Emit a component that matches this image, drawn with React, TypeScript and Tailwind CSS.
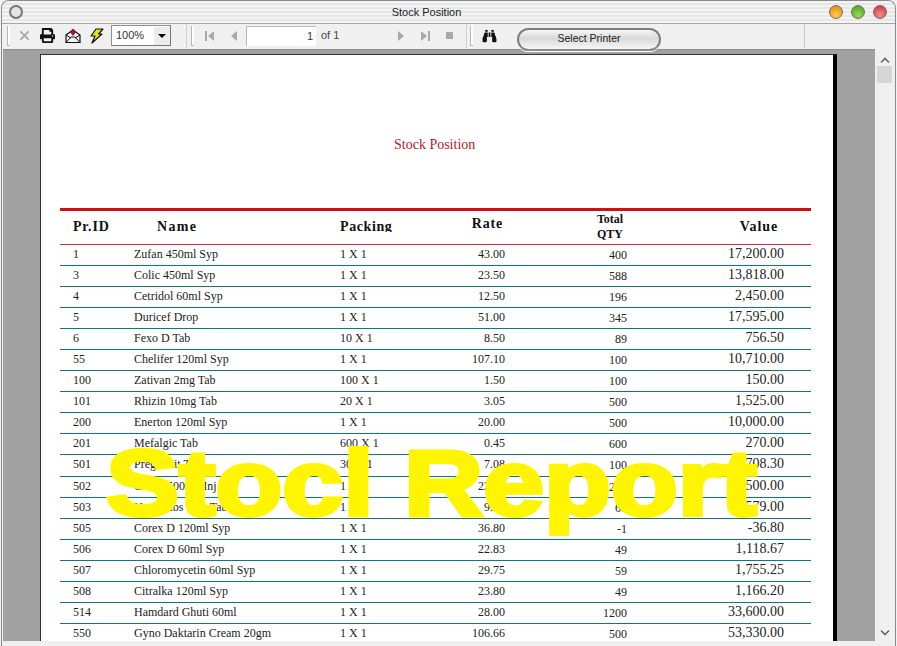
import React from "react";
import { FaBinoculars, FaPrint } from "react-icons/fa";

const rows = [
  ["1", "Zufan 450ml Syp", "1 X 1", "43.00", "400", "17,200.00"],
  ["3", "Colic 450ml Syp", "1 X 1", "23.50", "588", "13,818.00"],
  ["4", "Cetridol 60ml Syp", "1 X 1", "12.50", "196", "2,450.00"],
  ["5", "Duricef Drop", "1 X 1", "51.00", "345", "17,595.00"],
  ["6", "Fexo D Tab", "10 X 1", "8.50", "89", "756.50"],
  ["55", "Chelifer 120ml Syp", "1 X 1", "107.10", "100", "10,710.00"],
  ["100", "Zativan 2mg Tab", "100 X 1", "1.50", "100", "150.00"],
  ["101", "Rhizin 10mg Tab", "20 X 1", "3.05", "500", "1,525.00"],
  ["200", "Enerton 120ml Syp", "1 X 1", "20.00", "500", "10,000.00"],
  ["201", "Mefalgic Tab", "600 X 1", "0.45", "600", "270.00"],
  ["501", "Pregnovit Tab", "30 X 1", "7.08", "100", "708.30"],
  ["502", "Cefim 500mg Inj", "1 X 1", "22.50", "200", "4,500.00"],
  ["503", "Neurotabs Plus Tab", "1 X 1", "9.65", "60", "579.00"],
  ["505", "Corex D 120ml Syp", "1 X 1", "36.80", "-1", "-36.80"],
  ["506", "Corex D 60ml Syp", "1 X 1", "22.83", "49", "1,118.67"],
  ["507", "Chloromycetin 60ml Syp", "1 X 1", "29.75", "59", "1,755.25"],
  ["508", "Citralka 120ml Syp", "1 X 1", "23.80", "49", "1,166.20"],
  ["514", "Hamdard Ghuti 60ml", "1 X 1", "28.00", "1200", "33,600.00"],
  ["550", "Gyno Daktarin Cream 20gm", "1 X 1", "106.66", "500", "53,330.00"],
];

const grid = "grid grid-cols-[74px_206px_80px_85px_122px_157px_27px]";

function Grip() {
  return <div className="w-[3px] h-[20px] border-l border-b border-[#b5b5b5] bg-white shrink-0" />;
}

function Light({ from, to }: { from: string; to: string }) {
  return (
    <div
      className="w-[14px] h-[14px] rounded-full border border-[#77705f]"
      style={{ background: `radial-gradient(circle at 50% 75%, ${from}, ${to})` }}
    />
  );
}

function Tri({ d }: { d: string }) {
  return (
    <svg width="12" height="12" viewBox="0 0 12 12" className="shrink-0">
      <path d={d} fill="#a9a9a9" />
    </svg>
  );
}

export default function App() {
  return (
    <div className="w-[897px] h-[646px] bg-[#f1f1f1] overflow-hidden font-['Liberation_Sans',sans-serif] relative">
      <div className="h-full ml-[1px] mr-[1px] flex flex-col rounded-t-[8px] border-t border-x border-[#8a8a8a] bg-[#efefef] overflow-hidden">
        {/* Title bar */}
        <div className="h-[23px] shrink-0 relative flex items-center justify-center border-b border-[#a5a5a5] bg-[repeating-linear-gradient(180deg,#f4f4f4_0px,#f4f4f4_2px,#e6e6e6_2px,#e6e6e6_4px)]">
          <span className="text-[11px] text-[#222] mr-[44px]">Stock Position</span>
          <div className="absolute left-[7px] top-[4px] w-[14px] h-[14px] rounded-full border-2 border-[#777] bg-[#e4e4e4]" />
          <div className="absolute right-[8px] top-[4px] flex gap-[8px]">
            <Light from="#ffc94a" to="#d98a10" />
            <Light from="#93dc52" to="#4c9c26" />
            <Light from="#f78a8a" to="#c92f38" />
          </div>
        </div>
        {/* Toolbar */}
        <div className="h-[25px] shrink-0 flex items-center bg-[#f0f0f0] pl-[5px] pb-[2px]">
          <Grip />
          <svg width="11" height="11" viewBox="0 0 12 12" className="ml-[9px] shrink-0">
            <path d="M1.5 1.5 10.5 10.5M10.5 1.5 1.5 10.5" stroke="#a5a5a5" strokeWidth="1.8" />
          </svg>
          <FaPrint className="ml-[10px] text-[#111] w-[15px] h-[15px] shrink-0" />
          <svg width="16" height="16" viewBox="0 0 16 16" className="ml-[10px] shrink-0">
            <path d="M1 7 8 2l7 5v7.5H1Z" fill="#f5f5f5" stroke="#111" strokeWidth="1.2" />
            <path d="M1 14.5 6 9h4l5 5.5M1 7l5 3M15 7l-5 3" fill="none" stroke="#111" strokeWidth="1" />
            <path d="M6.8 1h2.4v3h2L8 8 4.8 4h2Z" fill="#a3182a" />
          </svg>
          <svg width="15" height="16" viewBox="0 0 15 16" className="ml-[8px] shrink-0">
            <path d="M7 1h7L9.5 6H13L3 15l3-7H2Z" fill="#e8e21e" stroke="#111" strokeWidth="1.2" strokeLinejoin="round" />
          </svg>
          <div className="ml-[7px] w-[60px] h-[21px] shrink-0 flex items-center bg-white border-t border-l border-r border-b border-t-[#8f8f8f] border-l-[#8f8f8f] border-r-[#777] border-b-[#777]">
            <span className="text-[11px] text-[#333] pl-[4px] flex-1">100%</span>
            <div className="w-[16px] h-[18px] bg-[#ececec] flex items-center justify-center">
              <div className="w-0 h-0 border-x-[4px] border-x-transparent border-t-[4px] border-t-black" />
            </div>
          </div>
          <div className="ml-[15px] mr-[4px] h-[24px] border-l border-[#d0d0d0]" />
          <Grip />
          <div className="ml-[10px]"><Tri d="M1 1h2v10H1ZM10 1v10L4 6Z" /></div>
          <div className="ml-[12px]"><Tri d="M9 1v10L3 6Z" /></div>
          <div className="ml-[6px] w-[70px] h-[20px] shrink-0 bg-white border-t border-l border-[#b8b8b8] flex items-center justify-end pr-[3px] text-[11px] text-[#333]">1</div>
          <span className="ml-[5px] w-[19px] shrink-0 text-[11px] text-[#444] whitespace-nowrap">of 1</span>
          <div className="ml-[55px]"><Tri d="M3 1v10l6-5Z" /></div>
          <div className="ml-[12px]"><Tri d="M2 1v10l6-5ZM9 1h2v10H9Z" /></div>
          <div className="ml-[15px] w-[7px] h-[7px] bg-[#a9a9a9] mr-[13px] shrink-0" />
          <div className="h-[24px] border-l border-[#d0d0d0] mr-[3px]" />
          <Grip />
          <FaBinoculars className="ml-[9px] text-[#111] w-[15px] h-[14px] shrink-0" />
          <div className="ml-[20px] mt-[7px] w-[144px] h-[23px] shrink-0 relative z-10 rounded-full border-2 border-[#7d7d7d] border-b-[#8c8c8c] bg-[linear-gradient(180deg,#f6f6f6,#d9d9d9_45%,#f6f6f6)] flex items-center justify-center text-[10.5px] text-[#222] shadow-[0_1px_0_#fff]">
            Select Printer
          </div>
          <div className="ml-[143px] h-[24px] border-l border-[#c4c4c4]" />
        </div>
        {/* Body */}
        <div className="flex-1 min-h-0 flex">
          <div className="w-[872px] ml-[1px] h-[592px] bg-[#a1a1a1] pt-[4px] pl-[37px] border-t-[1px] border-[#8f8f8f] overflow-hidden shrink-0">
            <div className="w-[797px] h-[600px] bg-white border-t border-l border-black/80 border-r-[4px] border-r-black pl-[19px] relative font-['Liberation_Serif',serif] overflow-hidden">
              <div className="h-[80px]" />
              <div className="pl-[334px] text-[14px] leading-[20px] text-[#b3202a] h-[73px]">Stock Position</div>
              <div className="w-[751px] h-[3px] bg-[#d01010]" />
              <div className={`${grid} w-[751px] h-[34px] border-b border-[#b33] font-bold text-[#111] text-[14px]`}>
                <div className="pl-[13px] pt-[8px] leading-[16px] tracking-[0.8px]">Pr.ID</div>
                <div className="pl-[23px] pt-[8px] leading-[16px] tracking-[1.3px]">Name</div>
                <div className="pt-[8px] h-[21px] overflow-hidden leading-[16px] tracking-[0.6px] whitespace-nowrap">Packing</div>
                <div className="text-right pr-[2px] pt-[5px] leading-[16px] tracking-[0.8px]">Rate</div>
                <div className="text-right pr-[1px] text-[12px] leading-[15px] pt-[1px]">
                  <div className="text-center w-[32px] ml-auto">Total<br />QTY</div>
                </div>
                <div className="text-right pr-[6px] pt-[8px] leading-[16px] tracking-[0.9px]">Value</div>
                <div />
              </div>
              {rows.map((r) => (
                <div key={r[0]} className={`${grid} w-[751px] h-[21.05px] border-b border-[#11777f] text-[12px] leading-[18px] text-[#222]`}>
                  <div className="pl-[13px]">{r[0]}</div>
                  <div>{r[1]}</div>
                  <div>{r[2]}</div>
                  <div className="text-right">{r[3]}</div>
                  <div className="text-right pt-[1px]">{r[4]}</div>
                  <div className="text-right text-[14px]">{r[5]}</div>
                  <div />
                </div>
              ))}
              <div className="absolute left-[65px] top-[373px] origin-left scale-x-[1.19] text-[92px] leading-[110px] font-bold whitespace-nowrap text-[#fff500] font-['Liberation_Sans',sans-serif] [-webkit-text-stroke:4px_#fff500]">
                Stocl Report
              </div>
            </div>
          </div>
          {/* Scrollbar */}
          <div className="w-[19px] h-[592px] bg-[#f0f0f0] flex flex-col items-center shrink-0 relative">
            <svg width="10" height="7" viewBox="0 0 10 7" className="mt-[8px]">
              <path d="M1 5.5 5 1.5l4 4" fill="none" stroke="#666" strokeWidth="1.6" />
            </svg>
            <div className="mt-[2px] w-[15px] h-[17px] bg-[#d6d6d6]" />
            <svg width="10" height="7" viewBox="0 0 10 7" className="absolute bottom-[5px]">
              <path d="M1 1.5 5 5.5l4-4" fill="none" stroke="#666" strokeWidth="1.6" />
            </svg>
          </div>
        </div>
      </div>
    </div>
  );
}
